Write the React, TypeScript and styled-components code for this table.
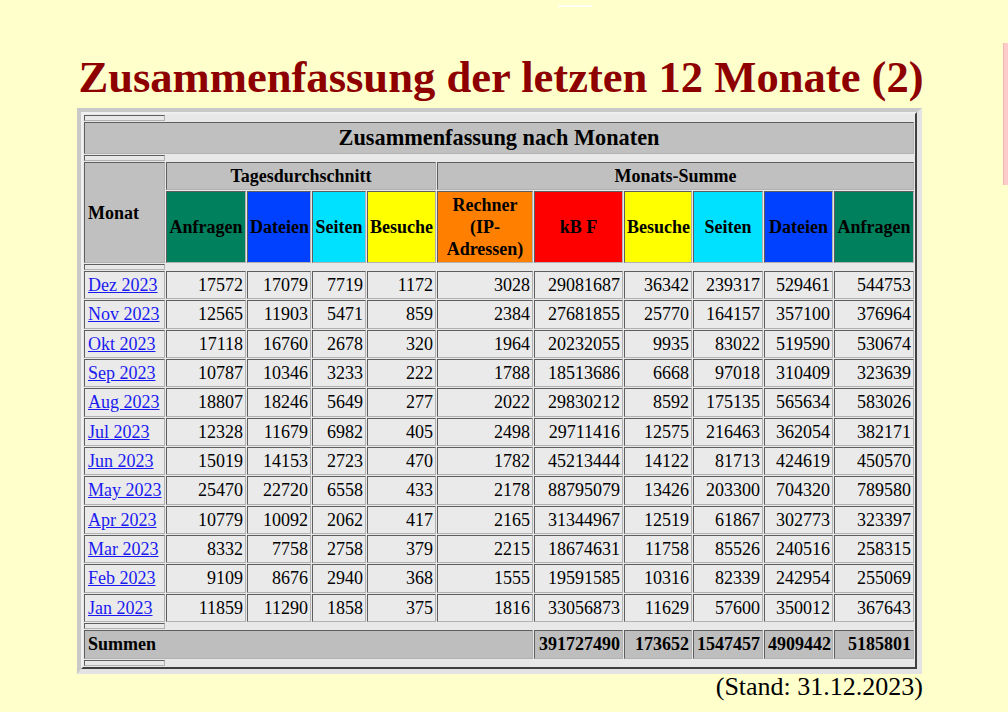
import React from "react";
import styled, { createGlobalStyle, css } from "styled-components";

const GlobalStyle = createGlobalStyle`
  html, body { margin: 0; padding: 0; background: #ffffcc; }
  body { font-family: "Liberation Serif", "Times New Roman", serif; }
`;

const Page = styled.div`
  position: relative;
  width: 1008px;
  height: 712px;
  overflow: hidden;
  background: #ffffcc;
  display: flex;
  flex-direction: column;
  font-family: "Liberation Serif", "Times New Roman", serif;
  color: #000;
`;

const Title = styled.h1`
  margin: 52px 0 0 0;
  padding-right: 6px;
  font-size: 44.6px;
  line-height: 50px;
  font-weight: bold;
  color: #8e0000;
  text-align: center;
  white-space: nowrap;
`;

const Frame = styled.div`
  align-self: flex-start;
  margin: 6px 0 0 77px;
  border-style: solid;
  border-width: 4px 5px 5px 4px;
  border-color: #c9c9c9 #e3e3e3 #e3e3e3 #c9c9c9;
`;

const Table = styled.table`
  border-collapse: separate;
  border-spacing: 1px;
  border-style: solid;
  border-width: 2px;
  border-color: #f0f0f0 #404040 #404040 #f0f0f0;
  background: #e8e8e8;
  table-layout: fixed;
  width: 836px;
`;

const cellBase = css`
  box-sizing: border-box;
  border: 1px solid;
  border-color: #5e5e5e #b2b2b2 #b2b2b2 #5e5e5e;
  padding: 0 2px;
  font-size: 18px;
  line-height: 22px;
  vertical-align: middle;
`;

const SpacerCell = styled.th`
  ${cellBase};
  height: 6px;
  padding: 0;
  background: #e8e8e8;
`;

const TitleCell = styled.th`
  ${cellBase};
  height: 32px;
  background: #c0c0c0;
  font-size: 22.3px;
  text-align: center;
`;

const HeadCell = styled.th<{ $bg?: string; $align?: string; $h?: number }>`
  ${cellBase};
  background: ${(p) => p.$bg || "#c0c0c0"};
  text-align: ${(p) => p.$align || "center"};
  height: ${(p) => (p.$h ? `${p.$h}px` : "auto")};
  font-weight: bold;
`;

const DataCell = styled.td`
  ${cellBase};
  height: 28.33px;
  background: #eaeaea;
  text-align: right;
`;

const MonthCell = styled(DataCell)`
  text-align: left;
  padding-left: 3px;
`;

const MonthLink = styled.a`
  color: #1a1af0;
  text-decoration: underline;
`;

const SumCell = styled.th<{ $align?: string }>`
  ${cellBase};
  height: 29px;
  background: #bebebe;
  text-align: ${(p) => p.$align || "right"};
  font-weight: bold;
  padding-left: 3px;
`;

const Stand = styled.div`
  text-align: right;
  padding-right: 85px;
  font-size: 26px;
  line-height: 26px;
`;

const PinkEdge = styled.div`
  position: absolute;
  left: 1003px;
  top: 43px;
  width: 5px;
  height: 142px;
  background: #ffcaca;
  border-left: 1px solid #f2b8b8;
  box-sizing: border-box;
`;

const TopMark = styled.div`
  position: absolute;
  left: 558px;
  top: 5px;
  width: 34px;
  height: 2px;
  background: #ffffff;
  opacity: 0.8;
`;

const widths = [81, 80, 64, 54, 69, 96, 89, 68, 70, 69, 80];

const GREEN = "#00805c";
const BLUE = "#0040ff";
const CYAN = "#00e0ff";
const YELLOW = "#ffff00";
const ORANGE = "#ff8000";
const RED = "#ff0000";

const rows: [string, number[]][] = [
  ["Dez 2023", [17572, 17079, 7719, 1172, 3028, 29081687, 36342, 239317, 529461, 544753]],
  ["Nov 2023", [12565, 11903, 5471, 859, 2384, 27681855, 25770, 164157, 357100, 376964]],
  ["Okt 2023", [17118, 16760, 2678, 320, 1964, 20232055, 9935, 83022, 519590, 530674]],
  ["Sep 2023", [10787, 10346, 3233, 222, 1788, 18513686, 6668, 97018, 310409, 323639]],
  ["Aug 2023", [18807, 18246, 5649, 277, 2022, 29830212, 8592, 175135, 565634, 583026]],
  ["Jul 2023", [12328, 11679, 6982, 405, 2498, 29711416, 12575, 216463, 362054, 382171]],
  ["Jun 2023", [15019, 14153, 2723, 470, 1782, 45213444, 14122, 81713, 424619, 450570]],
  ["May 2023", [25470, 22720, 6558, 433, 2178, 88795079, 13426, 203300, 704320, 789580]],
  ["Apr 2023", [10779, 10092, 2062, 417, 2165, 31344967, 12519, 61867, 302773, 323397]],
  ["Mar 2023", [8332, 7758, 2758, 379, 2215, 18674631, 11758, 85526, 240516, 258315]],
  ["Feb 2023", [9109, 8676, 2940, 368, 1555, 19591585, 10316, 82339, 242954, 255069]],
  ["Jan 2023", [11859, 11290, 1858, 375, 1816, 33056873, 11629, 57600, 350012, 367643]],
];

const sums = [391727490, 173652, 1547457, 4909442, 5185801];

const Spacer = () => (
  <tr>
    <SpacerCell />
  </tr>
);

export default function App() {
  return (
    <Page>
      <GlobalStyle />
      <TopMark />
      <PinkEdge />
      <Title>Zusammenfassung der letzten 12 Monate (2)</Title>
      <Frame>
        <Table>
          <colgroup>
            {widths.map((w, i) => (
              <col key={i} style={{ width: w }} />
            ))}
          </colgroup>
          <tbody>
            <Spacer />
            <tr>
              <TitleCell colSpan={11}>Zusammenfassung nach Monaten</TitleCell>
            </tr>
            <Spacer />
            <tr>
              <HeadCell rowSpan={2} $align="left" style={{ paddingLeft: 3 }}>
                Monat
              </HeadCell>
              <HeadCell colSpan={4} $h={28}>
                Tagesdurchschnitt
              </HeadCell>
              <HeadCell colSpan={6} $h={28}>
                Monats-Summe
              </HeadCell>
            </tr>
            <tr>
              <HeadCell $bg={GREEN} $h={72}>Anfragen</HeadCell>
              <HeadCell $bg={BLUE}>Dateien</HeadCell>
              <HeadCell $bg={CYAN}>Seiten</HeadCell>
              <HeadCell $bg={YELLOW}>Besuche</HeadCell>
              <HeadCell $bg={ORANGE}>Rechner (IP-Adressen)</HeadCell>
              <HeadCell $bg={RED}>kB F</HeadCell>
              <HeadCell $bg={YELLOW}>Besuche</HeadCell>
              <HeadCell $bg={CYAN}>Seiten</HeadCell>
              <HeadCell $bg={BLUE}>Dateien</HeadCell>
              <HeadCell $bg={GREEN}>Anfragen</HeadCell>
            </tr>
            <Spacer />
            {rows.map(([m, vals]) => (
              <tr key={m}>
                <MonthCell>
                  <MonthLink href="#">{m}</MonthLink>
                </MonthCell>
                {vals.map((v, i) => (
                  <DataCell key={i}>{v}</DataCell>
                ))}
              </tr>
            ))}
            <Spacer />
            <tr>
              <SumCell colSpan={6} $align="left">
                Summen
              </SumCell>
              {sums.map((s, i) => (
                <SumCell key={i}>{s}</SumCell>
              ))}
            </tr>
            <Spacer />
          </tbody>
        </Table>
      </Frame>
      <Stand>(Stand: 31.12.2023)</Stand>
    </Page>
  );
}
